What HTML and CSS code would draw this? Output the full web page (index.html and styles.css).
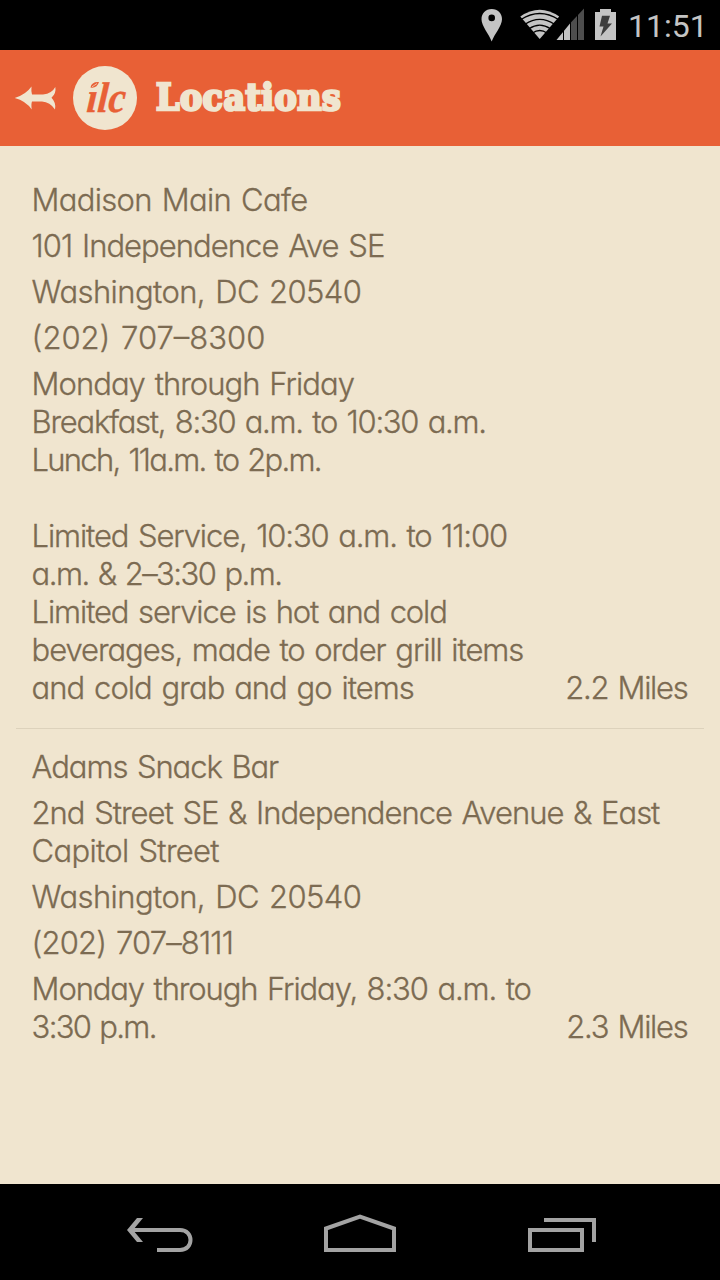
FILE: index.html
```html
<!DOCTYPE html>
<html lang="en">
<head>
    <meta charset="UTF-8">
    <meta name="viewport" content="width=device-width, initial-scale=1.0">
    <title>Locations</title>
    <link rel="stylesheet" href="styles.css">
</head>
<body>
    <div class="status-bar">
        <svg width="156" height="50" viewBox="470 0 156 50">
            <path fill="#c4c4c4" fill-rule="evenodd" d="M491.700 9C485.500 9 481.500 13.500 481.500 19.200C481.500 26 489 34 491.700 41.500C494.400 34 502 26 502 19.200C502 13.500 498 9 491.700 9ZM491.700 14.600A3.300 3.300 0 1 1 491.700 21.200A3.300 3.300 0 1 1 491.700 14.600Z"/>
            <path fill="#c4c4c4" d="M520.300 16.500Q539.700 3 559.200 16.500L539.700 39Z"/>
            <path fill="none" stroke="#000" stroke-width="1.300" d="M521 19.500Q539.700 7.500 558.500 19.500M525 24.200Q539.700 14.500 554.500 24.200M529 28.800Q539.700 21.500 550.500 28.800M532.500 33Q539.700 28 547 33"/>
            <path fill="#4d4d4d" d="M584 8.500V40H570V23.500Z"/>
            <path fill="#c4c4c4" d="M570 23.500V40H556.500Z"/>
            <path stroke="#000" d="M563.500 26V40M570.500 20V40M577.500 12V40"/>
            <path fill="#c4c4c4" d="M600 9H611V12H616V40H595V12H600Z"/>
            <path fill="#3d3d3d" d="M602 15.800H610L607.500 23.500H612L600.500 36.500L603.500 26.500H599.500Z"/>
        </svg>
        <span class="clock">11:51</span>
    </div>

    <div class="header">
        <svg width="140" height="96" viewBox="0 50 140 96">
            <path fill="#f0e5cf" d="M14.700 98Q26 94.500 31.500 86.500Q31 91.500 32 94.500H43Q52 93.500 55.300 87Q56.500 93 51.500 97.800Q56.500 103 55 109.500Q50 102 42 101.500H32Q31 104 31.700 109.500Q26 101 14.700 98Z"/>
            <circle class="logo-disc" cx="105" cy="98" r="32"/>
            <g transform="translate(86 112) skewX(-4)">
                <text class="logo-text" textLength="39" lengthAdjust="spacingAndGlyphs">ılc</text>
            </g>
            <path fill="#e86036" d="M90.500 87.500Q91.500 81.500 99 82Q97 88.500 90.500 87.500Z"/>
            <path stroke="#f0e5cf" stroke-width=".7" d="M92 86.800L97 83.500"/>
        </svg>
        <h1 class="title">Locations</h1>
    </div>

    <div class="locations">
        <div class="location">
            <p><span class="line">Madison Main Cafe</span></p>
            <p><span class="line l2">101 Independence Ave SE</span></p>
            <p><span class="line l3">Washington, DC 20540</span></p>
            <p><span class="line l4">(202) 707–8300</span></p>
            <div class="hours">
                <p>
                    <span class="line l5">Monday through Friday</span>
                    <span class="line l6">Breakfast, 8:30 a.m. to 10:30 a.m.</span>
                    <span class="line l7">Lunch, 11a.m. to 2p.m.</span>
                    <span class="line">&nbsp;</span>
                    <span class="line l8">Limited Service, 10:30 a.m. to 11:00</span>
                    <span class="line l9">a.m. &amp; 2–3:30 p.m.</span>
                    <span class="line l10">Limited service is hot and cold</span>
                    <span class="line l11">beverages, made to order grill items</span>
                    <span class="line l12">and cold grab and go items</span>
                </p>
                <span class="distance">2.2 Miles</span>
            </div>
        </div>
        <div class="location">
            <p><span class="line l13">Adams Snack Bar</span></p>
            <p>
                <span class="line l14">2nd Street SE &amp; Independence Avenue &amp; East</span>
                <span class="line">Capitol Street</span>
            </p>
            <p><span class="line l3">Washington, DC 20540</span></p>
            <p><span class="line l16">(202) 707–8111</span></p>
            <div class="hours">
                <p>
                    <span class="line l17">Monday through Friday, 8:30 a.m. to</span>
                    <span class="line l18">3:30 p.m.</span>
                </p>
                <span class="distance">2.3 Miles</span>
            </div>
        </div>
    </div>

    <div class="nav-bar">
        <svg width="720" height="96" viewBox="0 1184 720 96" fill="none" stroke="#a3a3a3" stroke-width="4">
            <path d="M131 1230H180C194 1230 194 1250 180 1250H157"/>
            <path fill="#a3a3a3" stroke="none" d="M127 1230L137 1218H143L133 1230L143 1242H137Z"/>
            <path d="M326 1250V1228.500L360 1216.500L394 1228.500V1250Z"/>
            <path d="M530 1230H582V1250H530ZM544 1220H594V1242"/>
        </svg>
    </div>
</body>
</html>
```
FILE: styles.css
```css
body {
    margin: 0;
    height: 1280px;
    display: flex;
    flex-direction: column;
    overflow: hidden;
    background-color: #f0e5cf;
    color: #7c6b52;
    font-family: Inter, "Open Sans", sans-serif;
}
svg {
    display: block;
    flex: none;
}
p, h1 {
    margin: 0;
}
.status-bar {
    display: flex;
    height: 50px;
    padding-left: 470px;
    background-color: #000;
}
.clock {
    padding-left: 2px;
    color: #c4c4c4;
    font-family: Roboto, sans-serif;
    font-size: 32px;
    line-height: 52px;
    white-space: nowrap;
}
.header {
    display: flex;
    height: 96px;
    background-color: #e86036;
}
.logo-disc {
    fill: #f0e5cf;
}
.logo-text {
    fill: #e86036;
    stroke: #e86036;
    stroke-width: .4px;
    font: italic bold 43px "Liberation Serif", serif;
}
.title {
    padding-left: 16px;
    color: #f0e5cf;
    font-family: "DejaVu Serif Condensed", "DejaVu Serif", serif;
    font-size: 37px;
    line-height: 95px;
    letter-spacing: 0.5px;
    -webkit-text-stroke: 2.6px #f0e5cf;
}
.locations {
    flex: 1;
    padding: 16px;
}
.location {
    display: flex;
    flex-direction: column;
    gap: 8px;
    padding: 19px 16px 21px;
    font-size: 32px;
    line-height: 38px;
}
.location + .location {
    border-top: 1px solid #ddd2bc;
}
.line, .distance {
    display: block;
    white-space: nowrap;
    font-size: 31px;
    font-weight: 300;
    letter-spacing: -0.7px;
    word-spacing: 2px;
    font-feature-settings: "cv11";
    -webkit-text-stroke: 0.3px #7c6b52;
}
.line {
    margin-left: -0.4px;
}
.distance {
    margin-right: 0.6px;
    letter-spacing: -1.3px;
}
.l2 { letter-spacing: -0.97px; }
.l3 { letter-spacing: -0.58px; }
.l4 { letter-spacing: 0; }
.l5 { letter-spacing: -0.97px; }
.l6 { letter-spacing: -1.27px; }
.l7 { letter-spacing: -1.75px; }
.l8 { letter-spacing: -1.13px; }
.l9 { letter-spacing: -1.56px; }
.l10 { letter-spacing: -1.12px; }
.l11 { letter-spacing: -1.08px; }
.l12 { letter-spacing: -0.96px; }
.l13 { letter-spacing: -1.08px; }
.l14 { letter-spacing: -1.02px; }
.l16 { letter-spacing: -0.85px; }
.l17 { letter-spacing: -1.12px; }
.l18 { letter-spacing: -1.7px; }
.hours {
    display: flex;
    justify-content: space-between;
    align-items: flex-end;
}
.hours p {
    width: 500px;
}
.nav-bar {
    height: 96px;
    background-color: #000;
}
```
